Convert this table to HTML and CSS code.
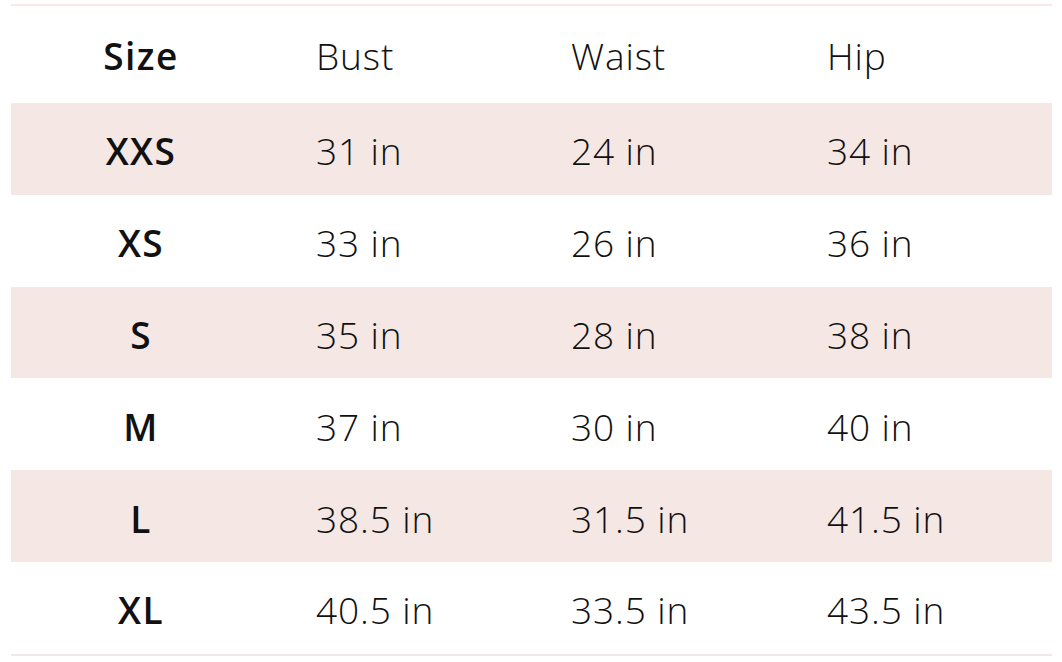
FILE: index.html
```html
<!DOCTYPE html>
<html lang="en">
<head>
<meta charset="utf-8">
<title>Size chart</title>
<link rel="stylesheet" href="styles.css">
</head>
<body>
<div class="chart">
  <div class="row head">
    <div class="cell size">Size</div>
    <div class="cell">Bust</div>
    <div class="cell">Waist</div>
    <div class="cell">Hip</div>
  </div>
  <div class="row alt">
    <div class="cell size">XXS</div>
    <div class="cell">31 in</div>
    <div class="cell">24 in</div>
    <div class="cell">34 in</div>
  </div>
  <div class="row">
    <div class="cell size">XS</div>
    <div class="cell">33 in</div>
    <div class="cell">26 in</div>
    <div class="cell">36 in</div>
  </div>
  <div class="row alt">
    <div class="cell size">S</div>
    <div class="cell">35 in</div>
    <div class="cell">28 in</div>
    <div class="cell">38 in</div>
  </div>
  <div class="row">
    <div class="cell size">M</div>
    <div class="cell">37 in</div>
    <div class="cell">30 in</div>
    <div class="cell">40 in</div>
  </div>
  <div class="row alt">
    <div class="cell size">L</div>
    <div class="cell">38.5 in</div>
    <div class="cell">31.5 in</div>
    <div class="cell">41.5 in</div>
  </div>
  <div class="row">
    <div class="cell size">XL</div>
    <div class="cell">40.5 in</div>
    <div class="cell">33.5 in</div>
    <div class="cell">43.5 in</div>
  </div>
</div>
</body>
</html>
```
FILE: styles.css
```css
html, body {
  margin: 0;
  padding: 0;
  background: #ffffff;
}
body {
  padding: 4px 10px 0 11px;
  font-family: "Open Sans", "DejaVu Sans", sans-serif;
  color: #111111;
}
.chart {
  border-top: 2px solid #f8e9e8;
  border-bottom: 2px solid #f3e6e6;
}
.row {
  display: grid;
  grid-template-columns: 260px 255px 256px 1fr;
  height: 91.8px;
  align-items: center;
}
.row.head {
  height: 97px;
}
.row.head .cell {
  padding-top: 1px;
}
.row.alt {
  background: #f5e7e4;
}
.cell {
  padding-left: 45px;
  font-size: 37px;
  font-weight: 350;
  letter-spacing: 0.9px;
  line-height: 1;
  padding-top: 4px;
}
.cell.size {
  padding-left: 0;
  text-align: center;
  font-weight: 600;
  letter-spacing: 1.4px;
}
```
